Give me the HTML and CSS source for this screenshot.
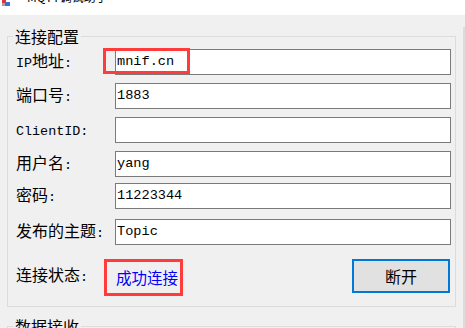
FILE: index.html
```html
<!DOCTYPE html>
<html lang="zh-CN">
<head>
<meta charset="utf-8">
<title>MQTT调试助手</title>
<link rel="stylesheet" href="styles.css">
</head>
<body>
<div class="titlebar">
  <svg class="appicon" width="9" height="6" viewBox="0 0 9 6">
    <rect x="0" y="0" width="4" height="3" fill="#d83b3b"/>
    <rect x="3" y="2" width="5" height="4" fill="#3a6fd8"/>
    <rect x="0" y="3" width="3" height="3" fill="#9aa4b8"/>
  </svg>
  <span class="title">MQTT调试助手</span>
</div>
<div class="main">
  <div class="col">
    <fieldset class="group config">
      <legend>连接配置</legend>
      <div class="row r1">
        <span class="lbl"><span class="lat">IP</span>地址<span class="lat">:</span></span>
        <div class="field"><input class="txt" value="mnif.cn"><span class="mark mark-ip"></span></div>
      </div>
      <div class="row r2">
        <span class="lbl">端口号<span class="lat">:</span></span>
        <div class="field"><input class="txt" value="1883"></div>
      </div>
      <div class="row r3">
        <span class="lbl"><span class="lat">ClientID:</span></span>
        <div class="field"><input class="txt" value=""></div>
      </div>
      <div class="row r4">
        <span class="lbl">用户名<span class="lat">:</span></span>
        <div class="field"><input class="txt" value="yang"></div>
      </div>
      <div class="row r5">
        <span class="lbl">密码<span class="lat">:</span></span>
        <div class="field"><input class="txt" value="11223344"></div>
      </div>
      <div class="row r6">
        <span class="lbl">发布的主题<span class="lat">:</span></span>
        <div class="field"><input class="txt" value="Topic"></div>
      </div>
      <div class="row status-row">
        <span class="lbl">连接状态<span class="lat">:</span></span>
        <div class="status-cell">
          <span class="status">成功连接</span>
          <span class="mark mark-status"></span>
          <button class="btn">断开</button>
        </div>
      </div>
    </fieldset>
    <fieldset class="group recv">
      <legend>数据接收</legend>
    </fieldset>
  </div>
  <fieldset class="group side"></fieldset>
</div>
</body>
</html>
```

FILE: styles.css
```css
html, body {
  margin: 0;
  padding: 0;
}
body {
  width: 465px;
  height: 328px;
  overflow: hidden;
  background: #f0f0f0;
  font-family: "Noto Sans CJK SC", "Liberation Sans", sans-serif;
  color: #000;
}
.titlebar {
  height: 15px;
  background: #ffffff;
  overflow: hidden;
  display: flex;
  align-items: flex-start;
}
.appicon {
  display: block;
  margin-left: 2px;
  margin-top: 0;
}
.title {
  margin-left: 16px;
  margin-top: -10px;
  font-size: 12px;
  line-height: 14px;
  color: #000;
}
.main {
  display: flex;
  align-items: flex-start;
  padding-left: 7px;
  margin-top: 12px;
  gap: 7px;
}
.col {
  display: flex;
  flex-direction: column;
  width: 450px;
}
.group {
  margin: 0;
  border: 1px solid #dcdcdc;
  min-width: 0;
}
.group legend {
  font-size: 16px;
  line-height: 18px;
  padding: 0 2px;
  margin-left: -3px;
}
.config {
  padding: 4px 4px 13px 8px;
}
.recv {
  margin-top: 10px;
  height: 40px;
  padding: 0 4px 0 8px;
}
.side {
  width: 30px;
  height: 300px;
  padding: 0;
}
.row {
  display: flex;
  align-items: flex-start;
  margin-top: 8px;
}
.r1 { margin-top: 0; }
.r5 { margin-top: 6px; }
.r6 { margin-top: 10px; }
.lbl {
  width: 99px;
  flex: none;
  font-size: 16px;
  line-height: 20px;
  margin-top: 1px;
  white-space: nowrap;
}
.lat {
  font-family: "Liberation Mono", monospace;
  font-size: 13.4px;
}
.field {
  position: relative;
  width: 336px;
  height: 26px;
}
.txt {
  display: block;
  box-sizing: border-box;
  width: 336px;
  height: 26px;
  margin: 0;
  border: 1px solid #7a7a7a;
  background: #ffffff;
  padding: 0 1px 2px 1px;
  font-family: "Liberation Mono", monospace;
  font-size: 13.6px;
  color: #000;
  outline: none;
}
.mark {
  position: absolute;
  box-sizing: border-box;
  border: 3px solid #ff3b3b;
}
.mark-ip {
  left: -12px;
  top: -1px;
  width: 87px;
  height: 26px;
}
.status-row {
  margin-top: 14px;
  align-items: center;
  height: 34px;
}
.status-row .lbl {
  margin-top: 0;
}
.status-cell {
  position: relative;
  width: 336px;
  height: 34px;
  display: flex;
  align-items: center;
}
.status {
  margin-left: 1px;
  margin-top: 2px;
  font-size: 15.5px;
  line-height: 20px;
  color: #0000ff;
}
.mark-status {
  left: -11px;
  top: 0;
  width: 79px;
  height: 37px;
}
.btn {
  margin-left: auto;
  margin-right: 1px;
  width: 98px;
  height: 34px;
  box-sizing: border-box;
  border: 2px solid #0078d7;
  background: #e1e1e1;
  font-family: "Noto Sans CJK SC", sans-serif;
  font-size: 16px;
  color: #000;
  padding: 0;
}
```
